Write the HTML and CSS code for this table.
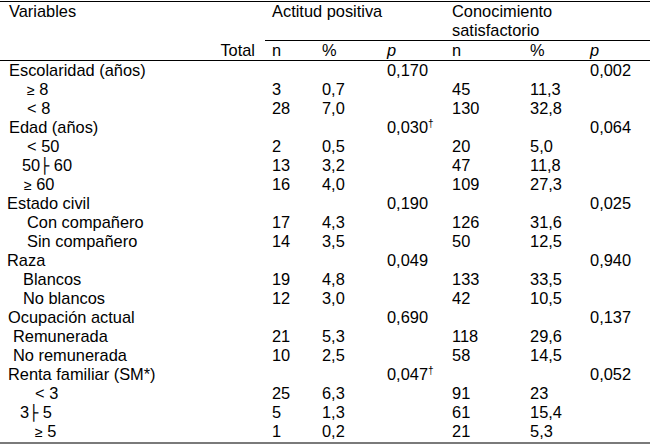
FILE: index.html
```html
<!DOCTYPE html>
<html lang="es">
<head>
<meta charset="utf-8">
<title>Tabla</title>
<link rel="stylesheet" href="styles.css">
</head>
<body>
<table class="tbl">
  <colgroup>
    <col class="c-var"><col class="c-tot"><col class="c-n1"><col class="c-p1"><col class="c-q1"><col class="c-n2"><col class="c-p2"><col class="c-q2">
  </colgroup>
  <thead>
    <tr class="h1">
      <th class="var in9">Variables</th>
      <th></th>
      <th colspan="3" class="grp g1">Actitud positiva</th>
      <th colspan="3" class="grp g2">Conocimiento<br>satisfactorio</th>
    </tr>
    <tr class="h2">
      <th></th>
      <th class="tot">Total</th>
      <th class="n1">n</th>
      <th class="p1">%</th>
      <th class="q1"><i>p</i></th>
      <th class="n2">n</th>
      <th class="p2">%</th>
      <th class="q2"><i>p</i></th>
    </tr>
  </thead>
  <tbody>
    <tr><td class="in9">Escolaridad (años)</td><td></td><td class="n1"></td><td class="p1"></td><td class="q1">0,170</td><td class="n2"></td><td class="p2"></td><td class="q2">0,002</td></tr>
    <tr><td class="in27"><span class="ge">≥</span> 8</td><td></td><td class="n1">3</td><td class="p1">0,7</td><td class="q1"></td><td class="n2">45</td><td class="p2">11,3</td><td class="q2"></td></tr>
    <tr><td class="in27">&lt; 8</td><td></td><td class="n1">28</td><td class="p1">7,0</td><td class="q1"></td><td class="n2">130</td><td class="p2">32,8</td><td class="q2"></td></tr>
    <tr><td class="in9">Edad (años)</td><td></td><td class="n1"></td><td class="p1"></td><td class="q1">0,030<sup>†</sup></td><td class="n2"></td><td class="p2"></td><td class="q2">0,064</td></tr>
    <tr><td class="in27">&lt; 50</td><td></td><td class="n1">2</td><td class="p1">0,5</td><td class="q1"></td><td class="n2">20</td><td class="p2">5,0</td><td class="q2"></td></tr>
    <tr><td class="in22">50<span class="rng">├</span> 60</td><td></td><td class="n1">13</td><td class="p1">3,2</td><td class="q1"></td><td class="n2">47</td><td class="p2">11,8</td><td class="q2"></td></tr>
    <tr><td class="in24"><span class="ge">≥</span> 60</td><td></td><td class="n1">16</td><td class="p1">4,0</td><td class="q1"></td><td class="n2">109</td><td class="p2">27,3</td><td class="q2"></td></tr>
    <tr><td class="in7">Estado civil</td><td></td><td class="n1"></td><td class="p1"></td><td class="q1">0,190</td><td class="n2"></td><td class="p2"></td><td class="q2">0,025</td></tr>
    <tr><td class="in27">Con compañero</td><td></td><td class="n1">17</td><td class="p1">4,3</td><td class="q1"></td><td class="n2">126</td><td class="p2">31,6</td><td class="q2"></td></tr>
    <tr><td class="in27">Sin compañero</td><td></td><td class="n1">14</td><td class="p1">3,5</td><td class="q1"></td><td class="n2">50</td><td class="p2">12,5</td><td class="q2"></td></tr>
    <tr><td class="in7">Raza</td><td></td><td class="n1"></td><td class="p1"></td><td class="q1">0,049</td><td class="n2"></td><td class="p2"></td><td class="q2">0,940</td></tr>
    <tr><td class="in23">Blancos</td><td></td><td class="n1">19</td><td class="p1">4,8</td><td class="q1"></td><td class="n2">133</td><td class="p2">33,5</td><td class="q2"></td></tr>
    <tr><td class="in23">No blancos</td><td></td><td class="n1">12</td><td class="p1">3,0</td><td class="q1"></td><td class="n2">42</td><td class="p2">10,5</td><td class="q2"></td></tr>
    <tr><td class="in8">Ocupación actual</td><td></td><td class="n1"></td><td class="p1"></td><td class="q1">0,690</td><td class="n2"></td><td class="p2"></td><td class="q2">0,137</td></tr>
    <tr><td class="in13">Remunerada</td><td></td><td class="n1">21</td><td class="p1">5,3</td><td class="q1"></td><td class="n2">118</td><td class="p2">29,6</td><td class="q2"></td></tr>
    <tr><td class="in13">No remunerada</td><td></td><td class="n1">10</td><td class="p1">2,5</td><td class="q1"></td><td class="n2">58</td><td class="p2">14,5</td><td class="q2"></td></tr>
    <tr><td class="in8">Renta familiar (SM*)</td><td></td><td class="n1"></td><td class="p1"></td><td class="q1">0,047<sup>†</sup></td><td class="n2"></td><td class="p2"></td><td class="q2">0,052</td></tr>
    <tr><td class="in35">&lt; 3</td><td></td><td class="n1">25</td><td class="p1">6,3</td><td class="q1"></td><td class="n2">91</td><td class="p2">23</td><td class="q2"></td></tr>
    <tr><td class="in20">3<span class="rng">├</span> 5</td><td></td><td class="n1">5</td><td class="p1">1,3</td><td class="q1"></td><td class="n2">61</td><td class="p2">15,4</td><td class="q2"></td></tr>
    <tr class="last"><td class="in35"><span class="ge">≥</span> 5</td><td></td><td class="n1">1</td><td class="p1">0,2</td><td class="q1"></td><td class="n2">21</td><td class="p2">5,3</td><td class="q2"></td></tr>
  </tbody>
</table>
</body>
</html>
```

FILE: styles.css
```css
html, body {
  margin: 0;
  padding: 0;
  background: #fff;
}

body {
  font-family: "Liberation Sans", Arial, sans-serif;
  font-size: 16.4px;
  color: #000;
}

.tbl {
  border-collapse: separate;
  border-spacing: 0;
  table-layout: fixed;
  width: 650px;
  margin-top: 1px;
  font-size: 16.4px;
}

.c-var { width: 212px; }
.c-tot { width: 53px; }
.c-n1 { width: 50px; }
.c-p1 { width: 67px; }
.c-q1 { width: 65px; }
.c-n2 { width: 75px; }
.c-p2 { width: 60px; }
.c-q2 { width: 68px; }

.tbl th,
.tbl td {
  padding: 0;
  height: 19px;
  line-height: 19px;
  text-align: left;
  font-weight: normal;
  white-space: nowrap;
  vertical-align: top;
  overflow: hidden;
}

.tbl .h1 th {
  border-top: 1px solid #000;
}

.tbl .h1 .grp {
  border-bottom: 1px solid #000;
}

.tbl .h2 th {
  border-bottom: 1px solid #000;
}

.tbl .g1 { padding-left: 7px; }
.tbl .g2 { padding-left: 5px; }

.tbl .tot {
  text-align: right;
  padding-right: 10px;
}

.tbl .n1 { padding-left: 7px; }
.tbl .p1 { padding-left: 7px; }
.tbl .q1 { padding-left: 5px; }
.tbl .n2 { padding-left: 5px; }
.tbl .p2 { padding-left: 8px; }
.tbl .q2 { padding-left: 8px; }

.tbl .last td {
  padding-bottom: 1px;
  border-bottom: 2px solid #7a7a7a;
}

.tbl .in7 { padding-left: 7px; }
.tbl .in8 { padding-left: 8px; }
.tbl .in9 { padding-left: 9px; }
.tbl .in13 { padding-left: 13px; }
.tbl .in20 { padding-left: 20px; }
.tbl .in22 { padding-left: 22px; }
.tbl .in23 { padding-left: 23px; }
.tbl .in24 { padding-left: 24px; }
.tbl .in27 { padding-left: 27px; }
.tbl .in35 { padding-left: 35px; }

.ge {
  font-size: 14px;
  line-height: 0;
}

.rng {
  font-family: "DejaVu Sans", sans-serif;
  font-size: 15px;
  line-height: 0;
}

sup {
  font-size: 10px;
  line-height: 0;
  vertical-align: 6px;
}
```
